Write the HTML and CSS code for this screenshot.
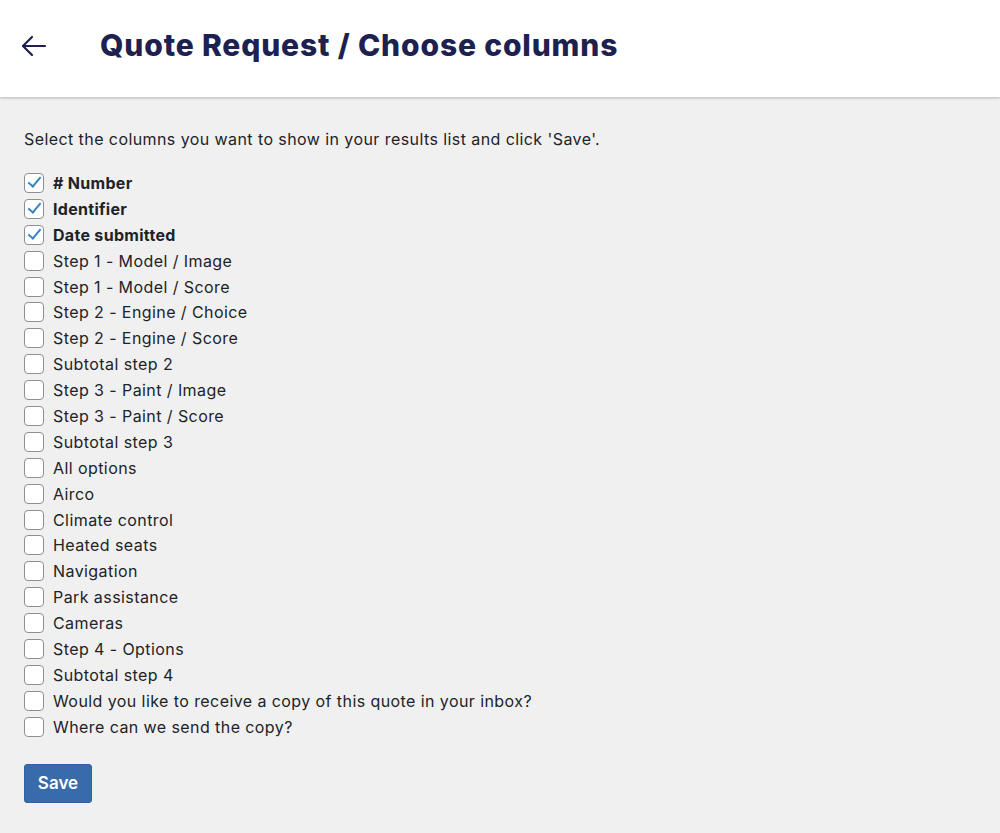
FILE: index.html
```html
<!DOCTYPE html>
<html lang="en">
<head>
    <meta charset="UTF-8">
    <meta name="viewport" content="width=device-width, initial-scale=1.0">
    <title>Quote Request / Choose columns</title>
    <link rel="stylesheet" href="styles.css">
</head>
<body>
    <header class="page-header">
        <a href="#" class="back-link" aria-label="Back">
            <svg width="26" height="24" viewBox="0 0 26 24" fill="none" stroke="#1d2150" stroke-width="2.2" stroke-linecap="round" stroke-linejoin="round">
                <path d="M24 12H2"/>
                <path d="M11 3L2 12l9 9"/>
            </svg>
        </a>
        <h1 class="page-title">Quote Request / Choose columns</h1>
    </header>

    <main class="columns-page">
        <p class="intro">Select the columns you want to show in your results list and click 'Save'.</p>

        <form class="columns-form">
            <ul class="column-list">
                <li><label class="required"><input type="checkbox" checked> # Number</label></li>
                <li><label class="required"><input type="checkbox" checked> Identifier</label></li>
                <li><label class="required"><input type="checkbox" checked> Date submitted</label></li>
                <li><label><input type="checkbox"> Step 1 - Model / Image</label></li>
                <li><label><input type="checkbox"> Step 1 - Model / Score</label></li>
                <li><label><input type="checkbox"> Step 2 - Engine / Choice</label></li>
                <li><label><input type="checkbox"> Step 2 - Engine / Score</label></li>
                <li><label><input type="checkbox"> Subtotal step 2</label></li>
                <li><label><input type="checkbox"> Step 3 - Paint / Image</label></li>
                <li><label><input type="checkbox"> Step 3 - Paint / Score</label></li>
                <li><label><input type="checkbox"> Subtotal step 3</label></li>
                <li><label><input type="checkbox"> All options</label></li>
                <li><label><input type="checkbox"> Airco</label></li>
                <li><label><input type="checkbox"> Climate control</label></li>
                <li><label><input type="checkbox"> Heated seats</label></li>
                <li><label><input type="checkbox"> Navigation</label></li>
                <li><label><input type="checkbox"> Park assistance</label></li>
                <li><label><input type="checkbox"> Cameras</label></li>
                <li><label><input type="checkbox"> Step 4 - Options</label></li>
                <li><label><input type="checkbox"> Subtotal step 4</label></li>
                <li><label><input type="checkbox"> Would you like to receive a copy of this quote in your inbox?</label></li>
                <li><label><input type="checkbox"> Where can we send the copy?</label></li>
            </ul>

            <button type="submit" class="save-button">Save</button>
        </form>
    </main>
</body>
</html>
```

FILE: styles.css
```css
body {
    margin: 0;
    font-family: Inter, "Liberation Sans", Arial, sans-serif;
    background-color: #f0f0f1;
    color: #1d2327;
}

.page-header {
    display: flex;
    align-items: center;
    height: 97px;
    padding: 0 21px;
    background-color: #fff;
    box-shadow: 0 1px 3px rgba(0, 0, 0, 0.15), 0 2px 1px rgba(0, 0, 0, 0.05);
    position: relative;
}

.back-link {
    display: flex;
    width: 26px;
    height: 24px;
    margin-top: -6px;
}

.page-title {
    margin: 0 0 0 53px;
    margin-top: -8px;
    font-family: Inter, "Open Sans", sans-serif;
    font-weight: 800;
    font-size: 30px;
    letter-spacing: 0.85px;
    color: #1d2150;
}

.columns-page {
    padding: 32px 24px 40px;
}

.intro {
    margin: 0 0 21px;
    font-size: 16px;
    line-height: 20px;
    letter-spacing: 0.42px;
}

.column-list {
    list-style: none;
    margin: 0;
    padding: 0;
}

.column-list li {
    height: 25.9px;
    display: flex;
    align-items: center;
}

.column-list label {
    display: flex;
    align-items: center;
    gap: 9px;
    font-size: 16px;
    letter-spacing: 0.42px;
    cursor: pointer;
}

.column-list label.required {
    font-weight: 700;
    letter-spacing: 0.3px;
}

.column-list input[type="checkbox"] {
    appearance: none;
    -webkit-appearance: none;
    margin: 0;
    width: 20px;
    height: 20px;
    border: 1px solid #8c8f94;
    border-radius: 4px;
    background-color: #fff;
    display: grid;
    place-items: center;
    flex-shrink: 0;
}

.column-list input[type="checkbox"]:checked::before {
    content: "";
    width: 11px;
    height: 5px;
    border-left: 2.6px solid #3582c4;
    border-bottom: 2.6px solid #3582c4;
    transform: translateY(-2px) rotate(-50deg);
}

.save-button {
    display: block;
    margin-top: 24px;
    width: 68px;
    height: 39px;
    padding: 0;
    border: 1px solid #2f62a0;
    border-radius: 3px;
    background-color: #386ba9;
    color: #fff;
    font-family: Inter, "Liberation Sans", Arial, sans-serif;
    font-weight: 600;
    font-size: 17px;
    cursor: pointer;
}

.save-button:hover {
    background-color: #2f5f98;
}
```
